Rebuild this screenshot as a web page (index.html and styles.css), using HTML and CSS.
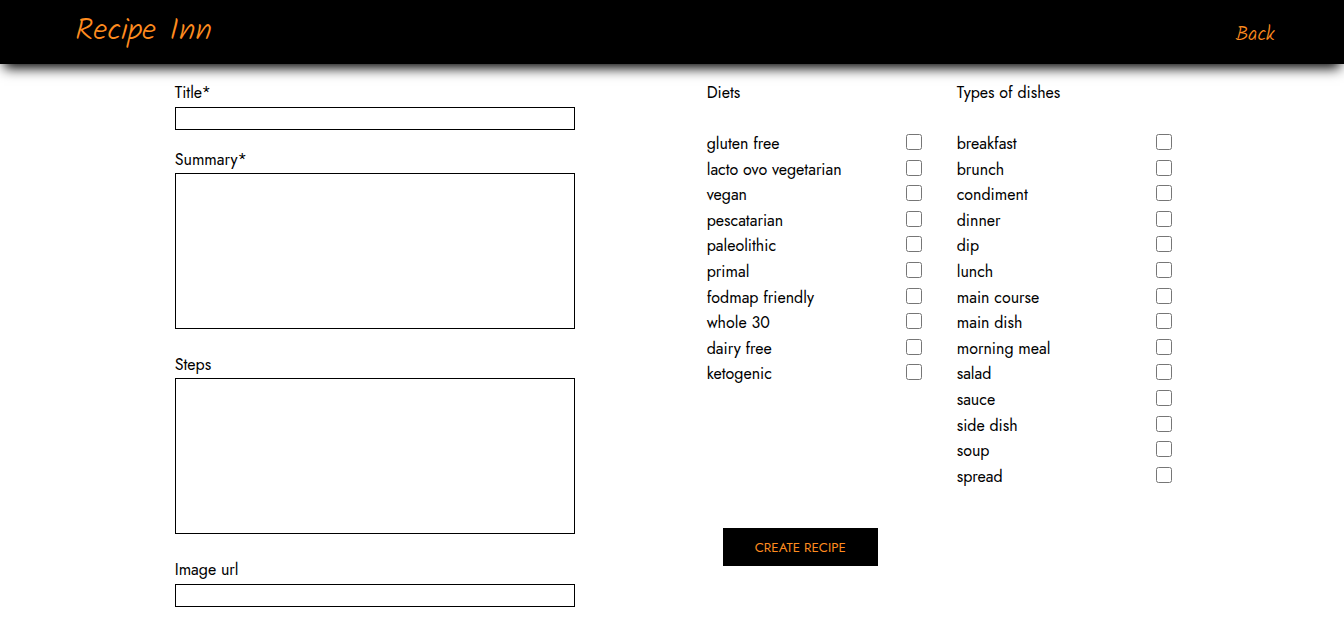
FILE: index.html
```html
<!DOCTYPE html>
<html lang="en">
<head>
<meta charset="utf-8">
<title>Recipe Inn</title>
<link rel="stylesheet" href="styles.css">
</head>
<body>
<header class="navbar">
  <a class="logo" href="#">Recipe Inn</a>
  <a class="back" href="#">Back</a>
</header>
<form class="recipe-form">
  <div class="details">
    <label for="title">Title*</label>
    <input class="field" id="title" type="text">
    <label for="summary">Summary*</label>
    <textarea class="field area" id="summary"></textarea>
    <label for="steps">Steps</label>
    <textarea class="field area" id="steps"></textarea>
    <label for="image">Image url</label>
    <input class="field" id="image" type="text">
  </div>
  <div class="options">
    <div class="lists">
      <fieldset class="group">
        <legend>Diets</legend>
        <label class="option">gluten free<input type="checkbox"></label>
        <label class="option">lacto ovo vegetarian<input type="checkbox"></label>
        <label class="option">vegan<input type="checkbox"></label>
        <label class="option">pescatarian<input type="checkbox"></label>
        <label class="option">paleolithic<input type="checkbox"></label>
        <label class="option">primal<input type="checkbox"></label>
        <label class="option">fodmap friendly<input type="checkbox"></label>
        <label class="option">whole 30<input type="checkbox"></label>
        <label class="option">dairy free<input type="checkbox"></label>
        <label class="option">ketogenic<input type="checkbox"></label>
      </fieldset>
      <fieldset class="group">
        <legend>Types of dishes</legend>
        <label class="option">breakfast<input type="checkbox"></label>
        <label class="option">brunch<input type="checkbox"></label>
        <label class="option">condiment<input type="checkbox"></label>
        <label class="option">dinner<input type="checkbox"></label>
        <label class="option">dip<input type="checkbox"></label>
        <label class="option">lunch<input type="checkbox"></label>
        <label class="option">main course<input type="checkbox"></label>
        <label class="option">main dish<input type="checkbox"></label>
        <label class="option">morning meal<input type="checkbox"></label>
        <label class="option">salad<input type="checkbox"></label>
        <label class="option">sauce<input type="checkbox"></label>
        <label class="option">side dish<input type="checkbox"></label>
        <label class="option">soup<input type="checkbox"></label>
        <label class="option">spread<input type="checkbox"></label>
      </fieldset>
    </div>
    <button class="create" type="submit">CREATE RECIPE</button>
  </div>
</form>
</body>
</html>
```
FILE: styles.css
```css
* {
  box-sizing: border-box;
}

body {
  margin: 0;
  background: #fff;
  color: #000;
  font-family: Jost, Lato, sans-serif;
  font-size: 16px;
  line-height: 1.6;
}

.navbar {
  display: flex;
  justify-content: space-between;
  align-items: center;
  height: 64px;
  padding: 0 69px 0 75px;
  background: #000;
  box-shadow: 0 8px 12px -4px #000;
  font-family: Kalam, Lato, cursive;
  font-weight: 300;
}

.navbar a {
  color: #ff8c1f;
  text-decoration: none;
}

.logo {
  font-size: 32px;
}

.back {
  padding-top: 6px;
  font-size: 20px;
}

.recipe-form {
  display: flex;
  align-items: flex-start;
  gap: 132px;
  padding: 16px 0 12px 13%;
}

.details {
  display: flex;
  flex-direction: column;
  width: 400px;
  line-height: 26px;
}

.field {
  width: 100%;
  height: 23px;
  margin: 1px 0 17px;
  padding: 1px 4px;
  border: 1px solid #000;
  border-radius: 0;
  background: #fff;
  font: inherit;
}

.area {
  height: 156px;
  margin: 0 0 23px;
  resize: none;
}

.lists {
  display: flex;
  gap: 35px;
}

.group {
  width: 215px;
  margin: 0;
  padding: 0;
  border: 0;
}

.group legend {
  margin-bottom: 25px;
  padding: 0;
  line-height: 26px;
}

.option {
  display: flex;
  justify-content: space-between;
}

.option input {
  width: 16px;
  height: 16px;
  margin: 3px 0 0;
}

.create {
  margin: 39px 0 0 16px;
  padding: 12px 32px 10px;
  border: 0;
  background: #000;
  color: #ff8c1f;
  font-family: inherit;
  line-height: 16px;
}
```
